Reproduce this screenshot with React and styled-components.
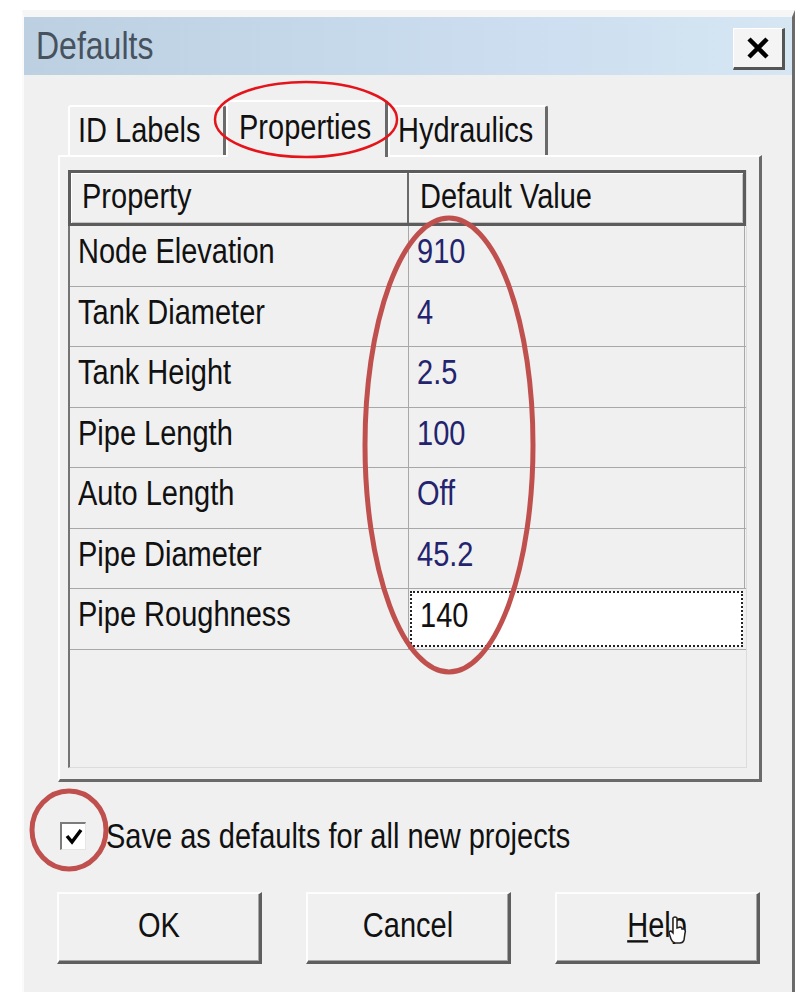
import React from "react"
import styled, { createGlobalStyle } from "styled-components"

const GlobalStyle = createGlobalStyle`
  html, body {
    margin: 0;
    padding: 0;
    background: #fff;
  }
  body {
    font-family: "Liberation Sans", Arial, sans-serif;
    color: #111;
  }
`

// the dialog font is a tall, narrow sans: stretch Liberation Sans vertically
const Txt = styled.span`
  display: inline-block;
  white-space: nowrap;
  transform: scaleY(1.2);
  transform-origin: 50% 55%;
`

const Page = styled.div`
  position: relative;
  width: 800px;
  height: 992px;
  overflow: hidden;
  padding: 10px 0 0 22px;
  box-sizing: border-box;
`

const Dialog = styled.div`
  width: 773px;
  height: 990px;
  box-sizing: border-box;
  background: #f0f0f0;
  border-top: 7px solid #f6f6f6;
  border-left: 2px solid #fbfbfb;
  border-right: 3px solid #6b6b6b;
  display: flex;
  flex-direction: column;
`

const TitleBar = styled.div`
  height: 58px;
  display: flex;
  align-items: center;
  justify-content: space-between;
  padding: 0 7px 0 12px;
  background: linear-gradient(to right, #bcd0e1, #cddff0 70%, #d6e6f3);
`

const Title = styled.span`
  font-size: 32px;
  color: #46525e;
`

const CloseButton = styled.button`
  width: 52px;
  height: 42px;
  padding: 0;
  margin-top: 6px;
  display: flex;
  align-items: center;
  justify-content: center;
  background: #f4f4f4;
  border-style: solid;
  border-width: 1px 3px 3px 1px;
  border-color: #ffffff #555 #555 #ffffff;
`

const Body = styled.div`
  flex: 1;
  display: flex;
  flex-direction: column;
  padding: 23px 0 0 34px;
`

const TabStrip = styled.div`
  height: 57px;
  display: flex;
  align-items: flex-end;
  padding-left: 10px;
  position: relative;
  z-index: 1;
`

const Tab = styled.div`
  box-sizing: border-box;
  width: ${p => p.$w}px;
  height: ${p => (p.$active ? 57 : 50)}px;
  display: flex;
  align-items: center;
  padding: ${p => (p.$active ? "0 0 4px 11px" : "0 0 2px 8px")};
  font-size: 29px;
  background: #f0f0f0;
  border-style: solid;
  border-color: #ffffff #6a6a6a #f0f0f0 #ffffff;
  border-width: 2px 3px 0 2px;
  border-radius: 3px 3px 0 0;
  margin-bottom: ${p => (p.$active ? -2 : 0)}px;
`

const Panel = styled.div`
  width: 704px;
  height: 627px;
  box-sizing: border-box;
  border-style: solid;
  border-width: 2px 3px 3px 2px;
  border-color: #ffffff #6a6a6a #6a6a6a #ffffff;
  padding: 13px 12px 11px 8px;
`

const Grid = styled.div`
  height: 100%;
  box-sizing: border-box;
  border-left: 2px solid #747474;
  border-right: 1px solid #dcdcdc;
  border-bottom: 1px solid #dcdcdc;
`

const HeaderRow = styled.div`
  display: grid;
  grid-template-columns: 336px 1fr;
  height: 56px;
  box-sizing: border-box;
  margin-left: -2px;
  border: 3px solid #5c5c5c;
  box-shadow: inset 1px 1px #ffffff, inset -1px -1px #c4c4c4;
`

const HeaderCell = styled.div`
  display: flex;
  align-items: center;
  padding: 0 0 3px 11px;
  font-size: 29px;
  & + & {
    border-left: 2px solid #6a6a6a;
  }
`

const Row = styled.div`
  display: grid;
  grid-template-columns: 339px 336px;
  height: 60.5px;
  box-sizing: border-box;
  border-bottom: 1px solid #a8a8a8;
`

const Cell = styled.div`
  display: flex;
  align-items: center;
  padding: 0 0 8px 8px;
  font-size: 29px;
  color: ${p => (p.$value ? "#24246e" : "#111")};
  border-right: 1px solid #a8a8a8;
  box-sizing: border-box;
`

const EditCell = styled.div`
  display: flex;
  align-items: center;
  margin: 2px 2px 2px 1px;
  padding: 0 0 6px 8px;
  font-size: 29px;
  background: #fff;
  border: 2px dotted #222;
`

const CheckRow = styled.label`
  display: flex;
  align-items: center;
  gap: 20px;
  margin: 38px 0 0 2px;
  height: 32px;
  font-size: 29px;
`

const CheckBox = styled.span`
  width: 26px;
  height: 28px;
  box-sizing: border-box;
  display: flex;
  align-items: center;
  justify-content: center;
  background: #fff;
  border-style: solid;
  border-width: 2px 1px 1px 2px;
  border-color: #7c7c7c #e6e6e6 #e6e6e6 #7c7c7c;
`

const ButtonRow = styled.div`
  display: flex;
  gap: 44px;
  margin: 40px 0 0 -1px;
`

const Button = styled.div`
  position: relative;
  width: 205px;
  height: 72px;
  box-sizing: border-box;
  display: flex;
  align-items: center;
  justify-content: center;
  padding-bottom: 4px;
  font-size: 29px;
  background: #f0f0f0;
  border-style: solid;
  border-width: 2px 3px 3px 2px;
  border-color: #fdfdfd #5e5e5e #5e5e5e #fdfdfd;
  box-shadow: inset -1px -1px #a6a6a6;
  u {
    text-decoration-thickness: 2px;
    text-underline-offset: 3px;
  }
`

const Pointer = styled.svg`
  position: absolute;
  left: 110px;
  top: 22px;
`

// hand-drawn marks sit above the whole dialog
const Marks = styled.svg`
  position: absolute;
  left: 0;
  top: 0;
  z-index: 5;
  pointer-events: none;
`

const properties = [
  ["Node Elevation", "910"],
  ["Tank Diameter", "4"],
  ["Tank Height", "2.5"],
  ["Pipe Length", "100"],
  ["Auto Length", "Off"],
  ["Pipe Diameter", "45.2"],
  ["Pipe Roughness", "140", true],
]

const App = () => {
  return (
    <Page>
      <GlobalStyle />
      <Dialog>
        <TitleBar>
          <Title><Txt>Defaults</Txt></Title>
          <CloseButton aria-label="Close">
            <svg width="24" height="22" viewBox="0 0 24 22">
              <path d="M3 2 L21 20 M21 2 L3 20" stroke="#000" strokeWidth="4.5" />
            </svg>
          </CloseButton>
        </TitleBar>
        <Body>
          <TabStrip>
            <Tab $w={158}><Txt>ID Labels</Txt></Tab>
            <Tab $w={162} $active><Txt>Properties</Txt></Tab>
            <Tab $w={160}><Txt>Hydraulics</Txt></Tab>
          </TabStrip>
          <Panel>
            <Grid>
              <HeaderRow>
                <HeaderCell><Txt>Property</Txt></HeaderCell>
                <HeaderCell><Txt>Default Value</Txt></HeaderCell>
              </HeaderRow>
              {properties.map(([name, value, editing]) => (
                <Row key={name}>
                  <Cell><Txt>{name}</Txt></Cell>
                  {editing ? (
                    <EditCell><Txt>{value}</Txt></EditCell>
                  ) : (
                    <Cell $value><Txt>{value}</Txt></Cell>
                  )}
                </Row>
              ))}
            </Grid>
          </Panel>
          <CheckRow>
            <CheckBox>
              <svg width="20" height="20" viewBox="0 0 20 20">
                <path d="M3 9 L8 15 L17 3" fill="none" stroke="#000" strokeWidth="3.5" />
              </svg>
            </CheckBox>
            <Txt>Save as defaults for all new projects</Txt>
          </CheckRow>
          <ButtonRow>
            <Button><Txt>OK</Txt></Button>
            <Button><Txt>Cancel</Txt></Button>
            <Button>
              <Txt><u>H</u>elp</Txt>
              <Pointer width="20" height="30" viewBox="0 0 20 30">
                <path
                  d="M6 2 Q8 0 10 2 L10 12 L13 11 Q15 11 15 13 L17 13 Q19 14 18 17 L17 24 Q16 27 13 27 L8 27 Q5 26 4 23 L2 17 Q2 15 4 15 L6 17 Z"
                  fill="#fff"
                  stroke="#222"
                  strokeWidth="1.5"
                />
              </Pointer>
            </Button>
          </ButtonRow>
        </Body>
      </Dialog>
      <Marks width="800" height="992" viewBox="0 0 800 992">
        <ellipse cx="306" cy="119.5" rx="91" ry="37.5" fill="none" stroke="#e5141b" strokeWidth="2.5" />
        <ellipse cx="449" cy="445" rx="84" ry="227" fill="none" stroke="#c0504d" strokeWidth="5" />
        <ellipse cx="69" cy="830" rx="37" ry="39" fill="none" stroke="#c0504d" strokeWidth="5" />
      </Marks>
    </Page>
  )
}

export default App
